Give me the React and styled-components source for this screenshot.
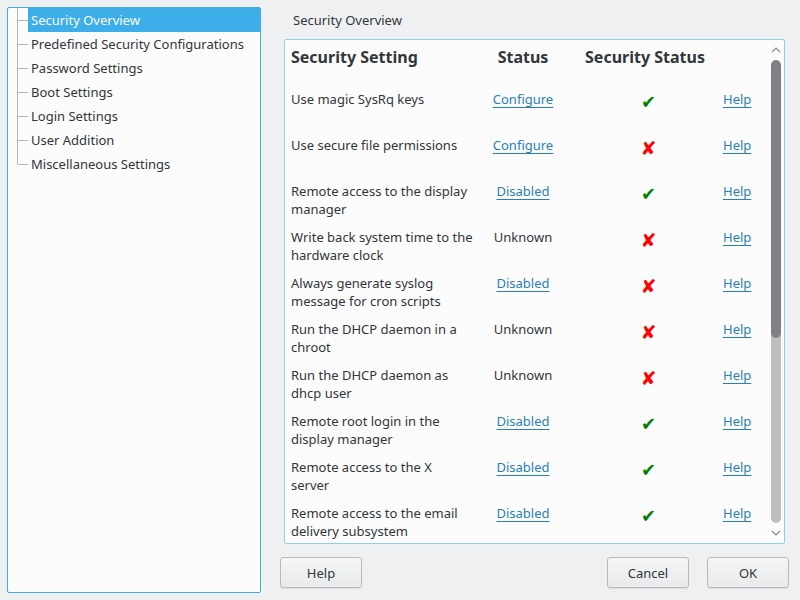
import React from "react";
import styled, { createGlobalStyle } from "styled-components";

const Global = createGlobalStyle`
  html, body { margin: 0; padding: 0; background: #eff0f1; }
  body { font-family: "Noto Sans", "DejaVu Sans", sans-serif; font-size: 13px; color: #31363b; }
  * { box-sizing: border-box; }
`;

const Window = styled.div`
  width: 800px;
  height: 600px;
  display: flex;
  gap: 19px;
  padding: 7px 11px 7px 7px;
  background: #eff0f1;
`;

const TreePanel = styled.div`
  width: 254px;
  height: 586px;
  flex: none;
  background: #fcfcfc;
  border: 1px solid #3daee9;
  border-radius: 2px;
  display: flex;
  flex-direction: column;
`;

const TreeRow = styled.div`
  display: flex;
  height: 24px;
  align-items: stretch;
`;

const Connector = styled.div`
  width: 20px;
  flex: none;
  position: relative;
  &::before {
    content: "";
    position: absolute;
    left: 9px;
    top: 0;
    width: 1px;
    height: ${(p) => (p.$last ? "12px" : "24px")};
    background: #b5b7b9;
  }
  &::after {
    content: "";
    position: absolute;
    left: 10px;
    top: 12px;
    width: 10px;
    height: 1px;
    background: #b5b7b9;
  }
`;

const TreeLabel = styled.div`
  flex: 1;
  padding-left: 3px;
  line-height: 24px;
  white-space: nowrap;
  background: ${(p) => (p.$selected ? "#3daee9" : "transparent")};
  color: ${(p) => (p.$selected ? "#fcfcfc" : "#31363b")};
`;

const RightColumn = styled.div`
  flex: 1;
  display: flex;
  flex-direction: column;
`;

const PageTitle = styled.div`
  padding-left: 13px;
  line-height: 26px;
  height: 26px;
`;

const ContentPanel = styled.div`
  margin: 6px 4px 0 4px;
  height: 505px;
  border: 1px solid #93cee9;
  border-radius: 2px;
  background: #fcfcfc;
  display: flex;
  overflow: hidden;
`;

const TableArea = styled.div`
  flex: 1;
  padding: 6px 0 0 6px;
  overflow: hidden;
`;

const Grid = styled.div`
  display: grid;
  grid-template-columns: 186px 92px 152px 1fr;
`;

const HeadCell = styled.div`
  font-weight: bold;
  font-size: 16px;
  line-height: 22px;
  height: 44px;
  text-align: ${(p) => p.$align || "left"};
  padding-left: ${(p) => p.$pl || 0}px;
  white-space: nowrap;
`;

const Cell = styled.div`
  line-height: 18px;
  height: 46px;
  white-space: nowrap;
  text-align: ${(p) => p.$align || "left"};
  padding-left: ${(p) => p.$pl || 0}px;
`;

const Link = styled.a`
  color: #2980b9;
  text-decoration: underline;
  text-underline-offset: 3px;
  cursor: pointer;
`;

const Mark = styled.span`
  display: inline-block;
  margin-top: 3px;
  font-family: "DejaVu Sans", sans-serif;
  font-size: ${(p) => (p.$ok ? "18px" : "19px")};
  line-height: 18px;
  color: ${(p) => (p.$ok ? "#008000" : "#ff0000")};
`;

const ScrollBar = styled.div`
  width: 16px;
  flex: none;
  display: flex;
  flex-direction: column;
  align-items: center;
`;

const ArrowBox = styled.div`
  height: 20px;
  width: 16px;
  display: flex;
  align-items: center;
  justify-content: center;
`;

const Track = styled.div`
  flex: 1;
  width: 10px;
  border-radius: 5px;
  background: #bdbec0;
  display: flex;
  flex-direction: column;
  overflow: hidden;
`;

const Thumb = styled.div`
  height: 278px;
  background: #7f8185;
  border-radius: 5px;
`;

const ButtonRow = styled.div`
  margin-top: 13px;
  display: flex;
  gap: 18px;
`;

const Button = styled.button`
  width: 82px;
  height: 31px;
  font-family: "Noto Sans", sans-serif;
  font-size: 13px;
  color: #31363b;
  background: linear-gradient(#f4f5f5, #e9eaeb);
  border: 1px solid #b9babb;
  border-radius: 3px;
  box-shadow: 0 1px 1px rgba(0,0,0,0.08);
  padding: 0;
  margin-left: ${(p) => (p.$push ? "auto" : "0")};
`;

const Chevron = ({ up }) => (
  <svg width="10" height="6" viewBox="0 0 10 6">
    <path
      d={up ? "M1 5 L5 1 L9 5" : "M1 1 L5 5 L9 1"}
      fill="none"
      stroke="#8a8d90"
      strokeWidth="1.2"
    />
  </svg>
);

const treeItems = [
  "Security Overview",
  "Predefined Security Configurations",
  "Password Settings",
  "Boot Settings",
  "Login Settings",
  "User Addition",
  "Miscellaneous Settings",
];

const rows = [
  [["Use magic SysRq keys"], "Configure", true, true],
  [["Use secure file permissions"], "Configure", true, false],
  [["Remote access to the display", "manager"], "Disabled", true, true],
  [["Write back system time to the", "hardware clock"], "Unknown", false, false],
  [["Always generate syslog", "message for cron scripts"], "Disabled", true, false],
  [["Run the DHCP daemon in a", "chroot"], "Unknown", false, false],
  [["Run the DHCP daemon as", "dhcp user"], "Unknown", false, false],
  [["Remote root login in the", "display manager"], "Disabled", true, true],
  [["Remote access to the X", "server"], "Disabled", true, true],
  [["Remote access to the email", "delivery subsystem"], "Disabled", true, true],
];

export default function App() {
  return (
    <>
      <Global />
      <Window>
        <TreePanel>
          {treeItems.map((t, i) => (
            <TreeRow key={t}>
              <Connector $last={i === treeItems.length - 1} />
              <TreeLabel $selected={i === 0}>{t}</TreeLabel>
            </TreeRow>
          ))}
        </TreePanel>
        <RightColumn>
          <PageTitle>Security Overview</PageTitle>
          <ContentPanel>
            <TableArea>
              <Grid>
                <HeadCell>Security Setting</HeadCell>
                <HeadCell $align="center">Status</HeadCell>
                <HeadCell $align="center">Security Status</HeadCell>
                <HeadCell />
                {rows.map(([lines, status, link, ok]) => (
                  <React.Fragment key={lines.join(" ")}>
                    <Cell>
                      {lines.map((l, i) => (
                        <React.Fragment key={l}>
                          {i > 0 && <br />}
                          {l}
                        </React.Fragment>
                      ))}
                    </Cell>
                    <Cell $align="center">
                      {link ? <Link>{status}</Link> : status}
                    </Cell>
                    <Cell $align="center" $pl={7}>
                      <Mark $ok={ok}>{ok ? "✔" : "✘"}</Mark>
                    </Cell>
                    <Cell $pl={2}>
                      <Link>Help</Link>
                    </Cell>
                  </React.Fragment>
                ))}
              </Grid>
            </TableArea>
            <ScrollBar>
              <ArrowBox>
                <Chevron up />
              </ArrowBox>
              <Track>
                <Thumb />
              </Track>
              <ArrowBox>
                <Chevron />
              </ArrowBox>
            </ScrollBar>
          </ContentPanel>
          <ButtonRow>
            <Button>Help</Button>
            <Button $push>Cancel</Button>
            <Button>OK</Button>
          </ButtonRow>
        </RightColumn>
      </Window>
    </>
  );
}
